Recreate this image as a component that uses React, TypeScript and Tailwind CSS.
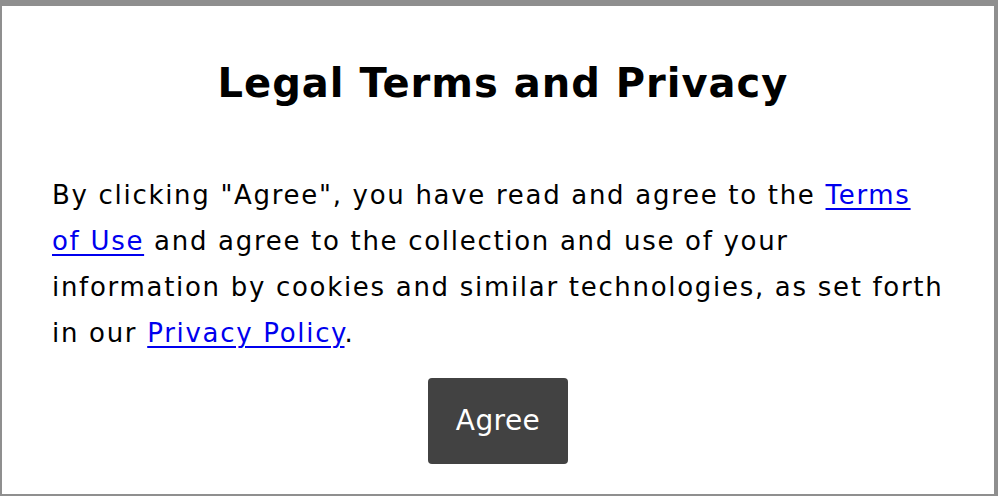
import React from "react";

export default function App() {
  return (
    <div className="w-[998px] h-[496px] bg-[#8f8f8f] pt-[6px] pl-[2px] pr-[4px] pb-[2px]" style={{ fontFamily: '"DejaVu Sans", "Liberation Sans", Arial, sans-serif' }}>
      <div className="w-full h-full bg-white flex flex-col items-center">
        <h1 className="mt-[53px] ml-[10px] text-[40px] leading-[48px] font-bold tracking-[1px] text-black">Legal Terms and Privacy</h1>
        <p className="mt-[65px] px-[50px] self-stretch text-[26px] leading-[46px] tracking-[1.7px] text-black">
          By clicking "Agree", you have read and agree to the{" "}
          <a href="#" className="text-[#0000ee] underline underline-offset-[4px]">Terms of Use</a> and agree to the collection and use of your information by cookies and similar technologies, as set forth in our{" "}
          <a href="#" className="text-[#0000ee] underline underline-offset-[4px]">Privacy Policy</a>.
        </p>
        <button className="mt-[22px] w-[140px] h-[86px] rounded-[4px] bg-[#424242] text-white text-[28px] tracking-[0.4px]">Agree</button>
      </div>
    </div>
  );
}
